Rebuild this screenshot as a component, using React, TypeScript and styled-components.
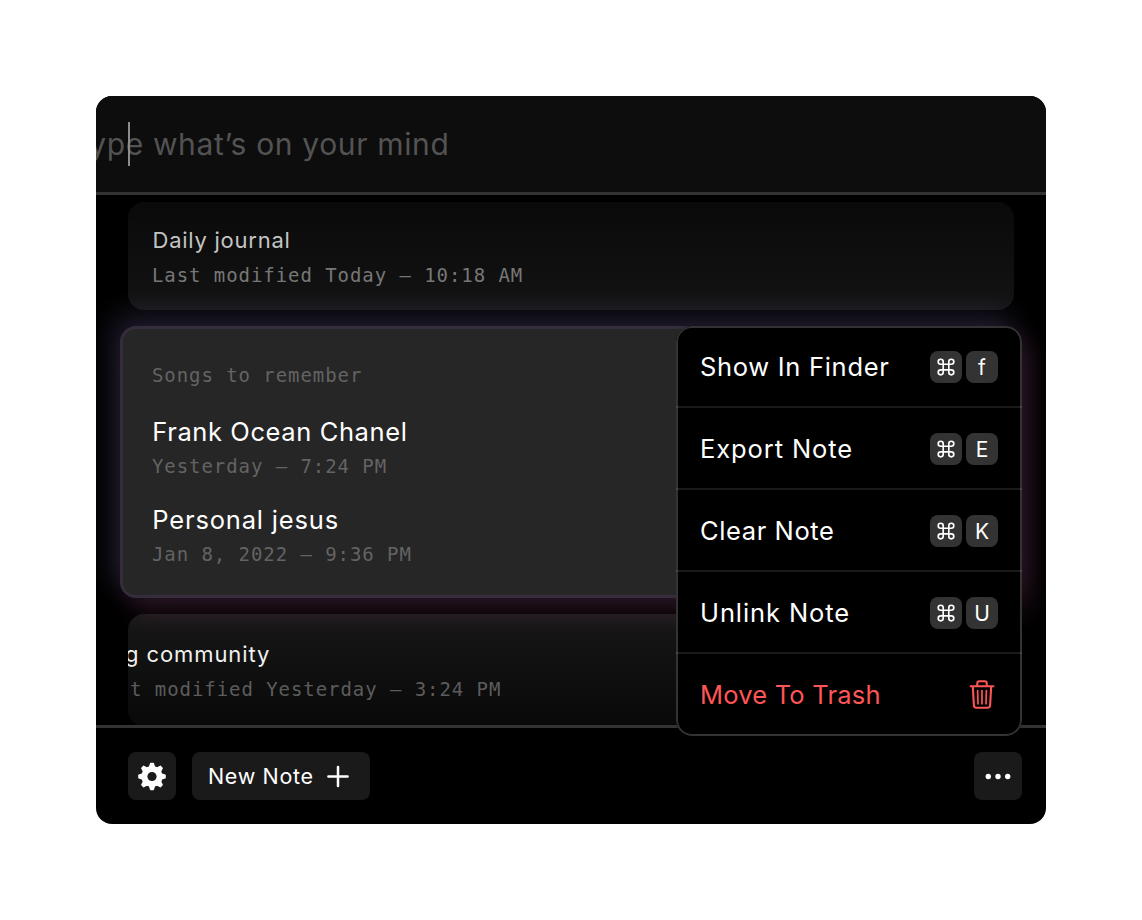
import React from 'react';
import styled, { createGlobalStyle } from 'styled-components';

const Global = createGlobalStyle`
  * { box-sizing: border-box; }
  body { margin: 0; background: #fff; font-family: Inter, "Liberation Sans", sans-serif; }
`;

const Page = styled.main`
  width: 1142px;
  height: 920px;
  padding: 96px;
`;

const Window = styled.div`
  position: relative;
  width: 950px;
  height: 728px;
  display: flex;
  flex-direction: column;
  background: #000;
  border-radius: 16px;
  overflow: hidden;
`;

const Prompt = styled.header`
  flex: none;
  position: relative;
  height: 99px;
  display: flex;
  align-items: center;
  background: #0d0d0d;
  border-bottom: 3px solid #333;
`;

const Line = styled.span<{ $size: number; $track?: number; $color?: string; $shift?: number; $height?: number }>`
  display: block;
  white-space: nowrap;
  font-size: ${(p) => p.$size}px;
  line-height: ${(p) => p.$height ?? 32}px;
  letter-spacing: ${(p) => p.$track ?? 0}px;
  color: ${(p) => p.$color ?? '#fff'};
  margin-left: ${(p) => p.$shift ?? 0}px;
`;

const Mono = styled(Line).attrs({ $size: 19, $track: 0.935 })`
  font-family: "DejaVu Sans Mono", monospace;
`;

const Caret = styled.i`
  position: absolute;
  left: 32px;
  top: 26px;
  width: 2px;
  height: 44px;
  background: #8c8c8c;
`;

const List = styled.section`
  flex: none;
  height: 530px;
  padding: 7px 24px 0;
  display: flex;
  flex-direction: column;
  gap: 16px;
  overflow: hidden;
`;

const Note = styled.article<{ $tone: string; $h: number; $pad: number }>`
  position: relative;
  z-index: 1;
  flex: none;
  height: ${(p) => p.$h}px;
  margin: 0 8px;
  padding: ${(p) => p.$pad}px 24px 0;
  border-radius: 16px;
  overflow: hidden;
  background: ${(p) => p.$tone};
`;

const ActiveNote = styled.article`
  flex: none;
  height: 272px;
  padding: 30px 29px 0;
  border: 3px solid #352d3b;
  border-radius: 16px;
  background: #262626;
  box-shadow: -8px -12px 28px rgba(54, 48, 78, 0.54), 8px 12px 28px rgba(78, 38, 62, 0.54);
`;

const Entry = styled.div<{ $top: number }>`
  margin-top: ${(p) => p.$top}px;
`;

const Footer = styled.footer`
  flex: 1;
  display: flex;
  align-items: flex-start;
  gap: 16px;
  padding: 24px 24px 0 32px;
  border-top: 3px solid #333;
`;

const Button = styled.button<{ $wide?: boolean; $end?: boolean }>`
  width: ${(p) => (p.$wide ? 178 : 48)}px;
  height: 48px;
  padding: ${(p) => (p.$wide ? '0 16px' : '0')};
  margin-left: ${(p) => (p.$end ? 'auto' : '0')};
  display: flex;
  align-items: center;
  justify-content: ${(p) => (p.$wide ? 'space-between' : 'center')};
  border: 0;
  border-radius: 8px;
  background: #1a1a1a;
  font-family: inherit;
`;

const Menu = styled.div`
  position: absolute;
  z-index: 2;
  left: 580px;
  top: 230px;
  width: 346px;
  border-radius: 16px;
  background: #000;
  overflow: hidden;
  &::before {
    content: '';
    position: absolute;
    inset: 0;
    border: 2px solid #333;
    border-radius: inherit;
    pointer-events: none;
  }
`;

const MenuRow = styled.div`
  position: relative;
  height: 82px;
  padding: 2px 24px 0;
  display: flex;
  align-items: center;
  justify-content: space-between;
  border-bottom: 2px solid rgba(255, 255, 255, 0.1);
  &:last-child { border-bottom-color: transparent; }
`;

const Keys = styled.div`
  display: flex;
  gap: 4px;
`;

const Key = styled.kbd`
  width: 32px;
  height: 32px;
  display: flex;
  align-items: center;
  justify-content: center;
  border-radius: 8px;
  background: #333;
  color: #fff;
  font: 21px Inter, sans-serif;
`;

const CommandIcon = () => (
  <svg width="18" height="18" viewBox="0 0 18 18" fill="none" stroke="#fff" strokeWidth="1.65">
    <path d="M6.2 6.2H3.7A2.5 2.5 0 1 1 6.2 3.7V14.3A2.5 2.5 0 1 1 3.7 11.8H14.3A2.5 2.5 0 1 1 11.8 14.3V3.7A2.5 2.5 0 1 1 14.3 6.2Z" />
  </svg>
);

const TrashIcon = () => (
  <svg width="32" height="32" viewBox="0 0 32 32" fill="none" stroke="#ff5557" strokeWidth="2.1" strokeLinecap="round" strokeLinejoin="round">
    <path d="M4.6 7.2H27.4M6.8 7.2L7.9 26.5Q8.1 28.7 10.2 28.7H21.8Q23.9 28.7 24.1 26.5L25.2 7.2M11.3 6.5V4.2Q11.3 2.2 13.2 2.2H18.8Q20.7 2.2 20.7 4.2V6.5" />
    <path strokeWidth="1.7" d="M11.6 11.5L12 24.8M16 11.5V24.8M20.4 11.5L20 24.8" />
  </svg>
);

const teeth = [0, 45, 90, 135, 180, 225, 270, 315];
const GearIcon = () => (
  <svg width="32" height="32" viewBox="-16 -16.5 32 32">
    <circle r="7.6" fill="none" stroke="#fff" strokeWidth="6" />
    {teeth.map((a) => (
      <path key={a} transform={`rotate(${a})`} fill="#fff" stroke="#fff" strokeWidth="1.4" strokeLinejoin="round" d="M-2.6 -9L-1.3 -13.1H1.3L2.6 -9Z" />
    ))}
  </svg>
);

const PlusIcon = () => (
  <svg width="32" height="32" viewBox="0 0 32 32" stroke="#fff" strokeWidth="2.5" strokeLinecap="round">
    <path d="M6.4 16.5H25.6M16 7V26" />
  </svg>
);

const DotsIcon = () => (
  <svg width="28" height="8" viewBox="0 0 28 8" fill="#fff">
    <circle cx="4.3" cy="4.5" r="2.7" />
    <circle cx="14" cy="4.5" r="2.7" />
    <circle cx="23.7" cy="4.5" r="2.7" />
  </svg>
);

const actions = [
  { label: 'Show In Finder', key: 'f', track: 0.7 },
  { label: 'Export Note', key: 'E', track: 0.9 },
  { label: 'Clear Note', key: 'K', track: 0.6 },
  { label: 'Unlink Note', key: 'U', track: 0.9 },
];

export default function App() {
  return (
    <Page>
      <Global />
      <Window>
        <Prompt>
          <Line $size={30} $track={0.65} $color="#535353" $shift={-25}>Type what’s on your mind</Line>
          <Caret />
        </Prompt>
        <List>
          <Note $h={108} $pad={22} $tone="linear-gradient(rgba(255,255,255,.04), rgba(255,255,255,.075))">
            <Line $size={22} $track={0.75} $color="#c4c4c4" $shift={0.5}>Daily journal</Line>
            <Mono $color="#777" $height={38}>Last modified Today — 10:18 AM</Mono>
          </Note>
          <ActiveNote>
            <Mono $color="#636363">Songs to remember</Mono>
            <Entry $top={25}>
              <Line $size={25.5} $track={0.6} $shift={0.3}>Frank Ocean Chanel</Line>
              <Mono $color="#636363" $height={36}>Yesterday — 7:24 PM</Mono>
            </Entry>
            <Entry $top={20}>
              <Line $size={25.5} $track={0.83} $shift={0.3}>Personal jesus</Line>
              <Mono $color="#636363" $height={36}>Jan 8, 2022 — 9:36 PM</Mono>
            </Entry>
          </ActiveNote>
          <Note $h={112} $pad={24} $tone="linear-gradient(rgba(255,255,255,.09), rgba(255,255,255,.035))">
            <Line $size={22} $track={0.9} $color="#f0f0f0" $shift={-27}>g community</Line>
            <Mono $color="#5c5c5c" $shift={-59} $height={38}>Last modified Yesterday — 3:24 PM</Mono>
          </Note>
        </List>
        <Footer>
          <Button aria-label="Settings"><GearIcon /></Button>
          <Button $wide>
            <Line as="span" $size={21.5} $track={0.65}>New Note</Line>
            <PlusIcon />
          </Button>
          <Button $end aria-label="More"><DotsIcon /></Button>
        </Footer>
        <Menu>
          {actions.map((a) => (
            <MenuRow key={a.label}>
              <Line $size={25.5} $track={a.track}>{a.label}</Line>
              <Keys>
                <Key><CommandIcon /></Key>
                <Key>{a.key}</Key>
              </Keys>
            </MenuRow>
          ))}
          <MenuRow>
            <Line $size={25.5} $track={0.2} $color="#ff5557">Move To Trash</Line>
            <TrashIcon />
          </MenuRow>
        </Menu>
      </Window>
    </Page>
  );
}
